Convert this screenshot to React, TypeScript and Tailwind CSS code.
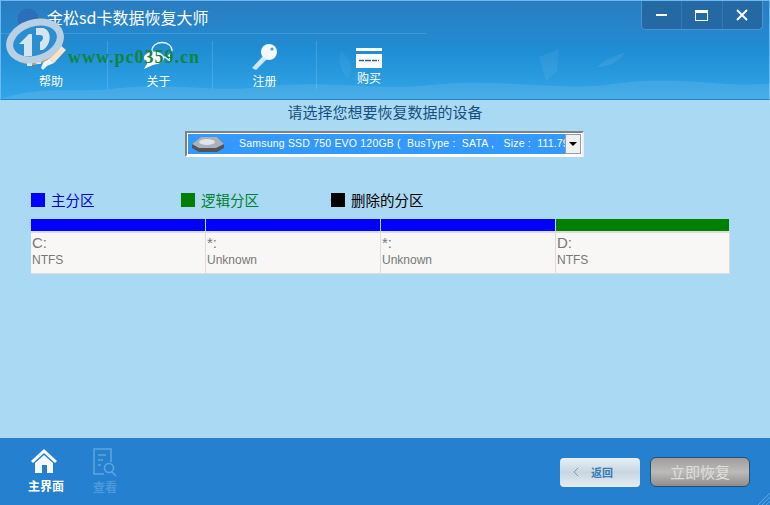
import { ChevronLeft } from 'lucide-react';

const cjk = "font-['Noto_Sans_CJK_SC','Liberation_Sans',sans-serif]";

const partitions = [
  { id: 1, drive: 'C:', fs: 'NTFS', bar: 'bg-[#0000ff]', width: 'w-[175px]' },
  { id: 2, drive: '*:', fs: 'Unknown', bar: 'bg-[#0000ff]', width: 'w-[175px]' },
  { id: 3, drive: '*:', fs: 'Unknown', bar: 'bg-[#0000ff]', width: 'w-[175px]' },
  { id: 4, drive: 'D:', fs: 'NTFS', bar: 'bg-[#008000]', width: 'w-[174px]' },
];

const HelpIcon = () => (
  <svg width="36" height="30" viewBox="0 0 36 30">
    <path d="M25 2 L33 9 L21 22 L13 15 Z" fill="#fbe3c4" />
    <path d="M13 15 L21 22 L14 25 L10 29 L8 27 L10 22 Z" fill="#eef6fc" />
  </svg>
);

const ChatIcon = () => (
  <svg width="36" height="30" viewBox="0 0 36 30">
    <ellipse cx="21" cy="9" rx="10" ry="7.5" fill="none" stroke="#e8f6ff" strokeWidth="1.3" />
    <path d="M24 16 L29 20 L28 14" fill="none" stroke="#e8f6ff" strokeWidth="1.3" />
    <ellipse cx="13" cy="17" rx="10" ry="6.5" fill="#fff" />
    <path d="M7 21 L3 28 L14 23 Z" fill="#fff" />
  </svg>
);

const KeyIcon = () => (
  <svg width="30" height="28" viewBox="0 0 30 28">
    <path d="M2 25 L14 12 L18 15 L6 27 Z" fill="#cfe6f6" />
    <circle cx="19" cy="9" r="8" fill="#f2f8fc" />
    <circle cx="22" cy="6" r="1.6" fill="#4a9bd4" />
  </svg>
);

const CardIcon = () => (
  <svg width="26" height="20" viewBox="0 0 26 20">
    <rect x="0" y="0" width="26" height="3" fill="#fff" />
    <rect x="0" y="6" width="26" height="14" fill="#fff" />
    <path d="M3 12.5 H23" stroke="#2f5f9a" strokeWidth="1.6" strokeDasharray="5 1 6 1" />
  </svg>
);

const DiskIcon = () => (
  <svg width="34" height="18" viewBox="0 0 34 18" className="shrink-0">
    <path d="M1 9 L10 2 H26 L33 9 V13 L26 17 H8 L1 13 Z" fill="#4f555a" />
    <path d="M1 9 L10 2 H26 L33 9 L25 13 H8 Z" fill="#aab2b8" />
    <ellipse cx="16" cy="7" rx="8" ry="3" fill="#dfe4e8" />
  </svg>
);

const HomeIcon = () => (
  <svg width="28" height="26" viewBox="0 0 28 26">
    <path d="M14 1 L27 13 L25 15 L14 5 L3 15 L1 13 Z" fill="#fff" />
    <path d="M5 15 L14 7 L23 15 V25 H17 V17 H12 V25 H5 Z" fill="#f2f8fd" />
  </svg>
);

const ReportIcon = () => (
  <svg width="26" height="30" viewBox="0 0 26 30" fill="none" stroke="#5da5de" strokeWidth="1.6">
    <path d="M12 26 H2 V1 H19 V14" />
    <path d="M6 7 H14 M6 12 H11 M6 17 H9" />
    <circle cx="17" cy="20" r="4.5" />
    <path d="M20 24 L24 28" />
  </svg>
);

const ToolItem = ({ label, icon, className }: { label: string; icon: React.ReactNode; className: string }) => (
  <div className={`flex flex-col items-center ${className}`}>
    <div className="h-[30px] flex items-end justify-center">{icon}</div>
    <span className="text-[12px] leading-[16px] text-white mt-[2px]">{label}</span>
  </div>
);

export default function App() {
  return (
    <div className={`w-[770px] h-[505px] flex flex-col bg-[#aad9f3] overflow-hidden ${cjk}`}>
      {/* title + toolbar */}
      <div className="relative h-[100px] shrink-0 flex flex-col bg-gradient-to-b from-[#2b7cc0] via-[#1f8dd4] to-[#32a6e8] border-t border-l border-r border-[#6cb8f0] border-b border-b-[#2a80c0]">
        <svg width="770" height="60" viewBox="0 0 770 60" className="absolute left-0 bottom-0" fill="#fff">
          <path d="M0 60 C40 46 70 54 110 50 C170 42 210 54 260 48 C320 40 380 52 430 46 C500 38 560 54 620 44 C680 36 730 50 770 44 V60 Z" opacity="0.1" />
          <path d="M538 18 L558 10 L556 32 L545 42 Z" opacity="0.06" />
          <path d="M596 28 C604 20 616 16 624 14 C618 22 608 28 596 28 Z" opacity="0.08" />
          <path d="M340 12 C352 22 352 34 346 40 C340 32 336 22 340 12 Z" opacity="0.05" />
        </svg>

        <div className="relative h-[33px] shrink-0 flex items-center pl-[46px] border-b border-[#4fa9e6]/60 w-[425px]">
          <span className="text-[16px] leading-[20px] text-white">金松sd卡数据恢复大师</span>
        </div>
        <div className="relative flex flex-1 pt-[7px]">
          <ToolItem label="帮助" icon={<HelpIcon />} className="w-[107px] pr-[6px] border-r border-white/15 h-[48px]" />
          <ToolItem label="关于" icon={<ChatIcon />} className="w-[105px] pr-[3px] border-r border-white/15 h-[48px]" />
          <ToolItem label="注册" icon={<KeyIcon />} className="w-[104px] border-r border-white/15 h-[48px]" />
          <ToolItem label="购买" icon={<CardIcon />} className="w-[104px] pb-[3px] h-[48px]" />
        </div>

        {/* window buttons */}
        <div className="absolute top-0 right-[6px] w-[122px] h-[29px] flex items-center bg-[#2468a4] border border-[#4c94cc] border-t-0 rounded-b-[5px] text-white">
          <div className="flex-1 h-full flex items-center justify-center border-r border-[#3579b3]">
            <div className="w-[11px] h-[2px] bg-white" />
          </div>
          <div className="flex-1 h-full flex items-center justify-center border-r border-[#3579b3]">
            <div className="w-[13px] h-[11px] border border-white border-t-[3px]" />
          </div>
          <div className="flex-1 h-full flex items-center justify-center">
            <svg width="12" height="12" viewBox="0 0 12 12" stroke="#fff" strokeWidth="2">
              <path d="M1 1 L11 11 M11 1 L1 11" />
            </svg>
          </div>
        </div>

        {/* site watermark */}
        <div className="absolute top-[5px] left-[4px] w-[60px] h-[64px]">
          <svg width="60" height="64" viewBox="0 0 60 64">
            <circle cx="23" cy="13" r="10.5" fill="#2a6fb8" />
            <path d="M22 23 C30 24 35 17 33 8 C37 16 32 26 22 23 Z" fill="#3f9c4a" />
            <path d="M2 40 C4 52 20 62 34 58 C46 54 56 44 58 28 L48 42 L14 50 Z" fill="#c39a5e" />
            <path d="M22 50 H27 V60 H22 Z M31 48 H36 V58 H31 Z" fill="#dbe6f0" />
            <ellipse cx="30" cy="35" rx="26" ry="18" transform="rotate(-18 30 35)" fill="#2a8ed2" stroke="#b9cfe2" strokeWidth="7" />
            <path d="M14 38 L24 28 H27 V50 H19 V38 Z M31 22 H38 C47 24 47 38 38 44 H35 V36 C39 34 39 29 35 29 H31 Z" fill="#d6e4f0" />
          </svg>
        </div>
        <span className="absolute top-[46px] left-[67px] whitespace-nowrap text-[18px] tracking-[1px] leading-[20px] font-bold text-[#0f8540] font-['Liberation_Serif',serif]">
          www.pc0359.cn
        </span>
      </div>

      {/* main */}
      <div className="flex-1 flex flex-col">
        <div className="text-center text-[15px] leading-[20px] text-[#17507f] mt-[2px]">请选择您想要恢复数据的设备</div>

        <div className="self-center ml-[-1px] mt-[9px] w-[399px] h-[26px] flex bg-white border-2 border-t-[#7d8288] border-l-[#7d8288] border-r-[#e8eef2] border-b-white p-[1px]">
          <div className="flex-1 min-w-0 flex items-center bg-[#3399ff] overflow-hidden pl-[3px]">
            <DiskIcon />
            <span className="ml-[14px] whitespace-nowrap text-[10.5px] tracking-[0.2px] text-white font-['Liberation_Sans',sans-serif]">
              Samsung SSD 750 EVO 120GB ( &nbsp;BusType : &nbsp;SATA , &nbsp; Size : &nbsp;111.79 GB )
            </span>
          </div>
          <div className="w-[16px] flex items-center justify-center bg-[#f0f0f0] border border-[#9a9a9a]">
            <div className="w-0 h-0 border-x-[4px] border-x-transparent border-t-[4px] border-t-black" />
          </div>
        </div>

        <div className="flex mt-[34px] ml-[31px] h-[18px] items-center text-[14.5px]">
          <div className="w-[150px] flex items-center gap-[6px] text-[#0000cc]">
            <div className="w-[14px] h-[14px] bg-[#0000ff]" />
            主分区
          </div>
          <div className="w-[150px] flex items-center gap-[6px] text-[#008030]">
            <div className="w-[14px] h-[14px] bg-[#008000]" />
            逻辑分区
          </div>
          <div className="flex items-center gap-[6px] text-black">
            <div className="w-[14px] h-[14px] bg-black" />
            删除的分区
          </div>
        </div>

        <div className="flex ml-[31px] mt-[10px] font-['Liberation_Sans',sans-serif]">
          {partitions.map((p) => (
            <div key={p.id} className={`${p.width} h-[55px] flex flex-col`}>
              <div className={`h-[12px] mr-[1px] ${p.bar}`} />
              <div className="flex-1 bg-[#f8f7f6] border-t-2 border-r border-b border-[#dcdcdc] pl-[1px] text-[#777]">
                <div className="text-[15px] leading-[17px] mt-[1px]">{p.drive}</div>
                <div className="text-[12px] leading-[15px] mt-[2px]">{p.fs}</div>
              </div>
            </div>
          ))}
        </div>
      </div>

      {/* footer */}
      <div className="relative h-[67px] shrink-0 flex items-start bg-[#2581d0] pl-[14px]">
        <div className="w-[60px] flex flex-col items-center pt-[10px]">
          <HomeIcon />
          <span className="text-[12px] leading-[14px] font-bold text-white mt-[5px] ml-[4px]">主界面</span>
        </div>
        <div className="w-[30px] ml-[16px] flex flex-col items-center pt-[10px]">
          <ReportIcon />
          <span className="text-[12px] leading-[14px] font-bold text-[#4f9ada] mt-[2px]">查看</span>
        </div>

        <div className="ml-auto flex items-center gap-[10px] pr-[20px] pt-[19px]">
          <button className="w-[80px] h-[29px] flex items-center rounded-[4px] bg-gradient-to-b from-[#e6eff6] via-[#c9d6e0] to-[#e4edf3] pl-[8px] text-[#3a7db5]">
            <ChevronLeft size={16} strokeWidth={1.2} className="text-[#6a8aa5]" />
            <span className="ml-[7px] text-[11px] font-bold">返回</span>
          </button>
          <button className="w-[100px] h-[30px] flex items-center justify-center rounded-[6px] border border-[#22506f] bg-gradient-to-b from-[#a09e9c] via-[#bdbbb9] to-[#8f8e8d] text-[15px] text-[#dedede]">
            立即恢复
          </button>
        </div>

        {/* resize grip */}
        <svg width="12" height="12" viewBox="0 0 12 12" stroke="#5fa6de" strokeWidth="1" className="absolute right-0 bottom-0">
          <path d="M0 12 L12 0 M4 12 L12 4 M8 12 L12 8" />
        </svg>
      </div>
    </div>
  );
}
